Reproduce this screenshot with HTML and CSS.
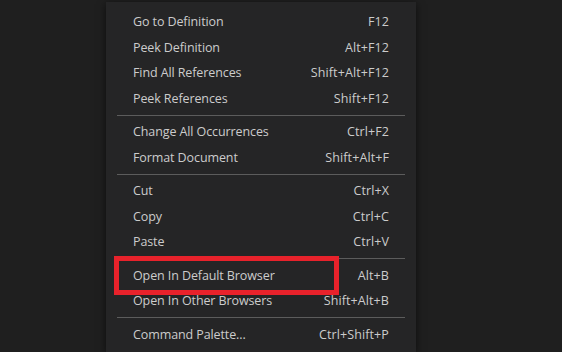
FILE: index.html
```html
<!DOCTYPE html>
<html>
<head>
<meta charset="utf-8">
<title>Context menu</title>
<link rel="stylesheet" href="styles.css">
</head>
<body>
<div class="menu">
  <div class="item"><span class="label">Go to Definition</span><span class="key">F12</span></div>
  <div class="item"><span class="label">Peek Definition</span><span class="key">Alt+F12</span></div>
  <div class="item"><span class="label">Find All References</span><span class="key">Shift+Alt+F12</span></div>
  <div class="item"><span class="label">Peek References</span><span class="key">Shift+F12</span></div>
  <div class="sep"></div>
  <div class="item"><span class="label">Change All Occurrences</span><span class="key">Ctrl+F2</span></div>
  <div class="item"><span class="label">Format Document</span><span class="key">Shift+Alt+F</span></div>
  <div class="sep"></div>
  <div class="item"><span class="label">Cut</span><span class="key">Ctrl+X</span></div>
  <div class="item"><span class="label">Copy</span><span class="key">Ctrl+C</span></div>
  <div class="item"><span class="label">Paste</span><span class="key">Ctrl+V</span></div>
  <div class="sep"></div>
  <div class="item marked"><span class="label">Open In Default Browser</span><span class="key">Alt+B</span><span class="mark"></span></div>
  <div class="item"><span class="label">Open In Other Browsers</span><span class="key">Shift+Alt+B</span></div>
  <div class="sep"></div>
  <div class="item"><span class="label">Command Palette...</span><span class="key">Ctrl+Shift+P</span></div>
</div>
</body>
</html>
```
FILE: styles.css
```css
html, body { margin: 0; height: 100%; overflow: hidden; }
body { background: #1f1f1f; font-family: "Open Sans", "Noto Sans", sans-serif; font-size: 12.5px; color: #cccccc; }

.menu {
  box-sizing: border-box;
  margin: 2px 0 0 106px;
  width: 310px;
  height: calc(100% - 2px);
  padding: 7px 0 0;
  background: #252526;
  box-shadow: 0 2px 8px rgba(0, 0, 0, 0.6);
}

.item {
  position: relative;
  height: 25.5px;
  line-height: 25.5px;
  padding: 0 27px;
  display: flex;
  justify-content: space-between;
  white-space: nowrap;
}
.label { letter-spacing: -0.1px; }
.key { letter-spacing: 0.1px; }

.sep { height: 1px; margin: 3.5px 11px; background: #5c5c5c; }

.mark {
  position: absolute;
  left: 8px; top: -7px;
  width: 215px; height: 29px;
  border: 5px solid #e8222b;
}
```
